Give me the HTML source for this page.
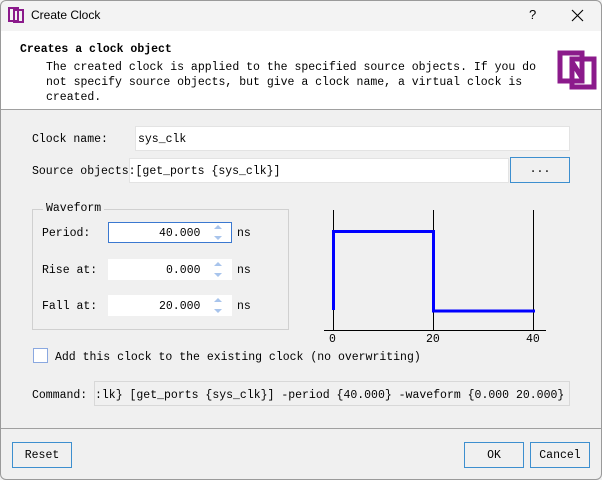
<!DOCTYPE html>
<html><head><style>
*{box-sizing:border-box;margin:0;padding:0}
body{width:602px;height:480px;position:relative;background:#f0f0f0;font-family:"Liberation Mono",monospace;font-size:11.5px;color:#000;overflow:hidden}
.a{position:absolute;white-space:pre}
.f{position:absolute;background:#fff;border:1px solid #e3e3e3}
.btn{position:absolute;border:1px solid #3d8fcf;background:#f0f0f0;text-align:center;line-height:25px}
</style></head><body>
<div class="a" style="left:0;top:0;width:602px;height:31px;background:#f3f3f3"></div>
<svg class="a" style="left:8px;top:7px" width="16" height="16" viewBox="0 0 16 16"><rect x="1" y="1" width="9" height="13" fill="none" stroke="#8b1a8b" stroke-width="2"/><rect x="6" y="3" width="9" height="12" fill="none" stroke="#8b1a8b" stroke-width="2"/></svg>
<div class="a" style="left:31px;top:8px;font-family:'Liberation Sans',sans-serif;font-size:12px">Create Clock</div>
<div class="a" style="left:529px;top:7px;font-family:'Liberation Sans',sans-serif;font-size:13px">?</div>
<svg class="a" style="left:571px;top:9px" width="13" height="13" viewBox="0 0 13 13"><path d="M1 1L12 12M12 1L1 12" stroke="#000" stroke-width="1.1"/></svg>
<div class="a" style="left:0;top:31px;width:602px;height:79px;background:#fff;border-bottom:1px solid #a0a0a0"></div>
<div class="a" style="left:20px;top:43px;font-weight:bold">Creates a clock object</div>
<div class="a" style="left:46px;top:60px;line-height:15px">The created clock is applied to the specified source objects. If you do
not specify source objects, but give a clock name, a virtual clock is
created.</div>
<svg class="a" style="left:557px;top:50px" width="40" height="40" viewBox="0 0 40 40"><rect x="3" y="3" width="22" height="28" fill="none" stroke="#8b1a8b" stroke-width="5"/><rect x="15" y="9" width="22" height="28" fill="none" stroke="#8b1a8b" stroke-width="5"/><path d="M15 12 L25 28" stroke="#8b1a8b" stroke-width="5"/></svg>
<div class="a" style="left:32px;top:133px">Clock name:</div>
<div class="f" style="left:135px;top:126px;width:435px;height:25px"></div>
<div class="a" style="left:138px;top:133px">sys_clk</div>
<div class="f" style="left:129px;top:158px;width:380px;height:25px"></div>
<div class="a" style="left:32px;top:165px">Source objects:[get_ports {sys_clk}]</div>
<div class="btn" style="left:510px;top:157px;width:60px;height:26px;line-height:24px">...</div>
<div class="a" style="left:32px;top:209px;width:257px;height:121px;border:1px solid #d0d0d0"></div>
<div class="a" style="left:43px;top:202px;background:#f0f0f0;padding:0 3px">Waveform</div>
<div class="a" style="left:42px;top:227px">Period:</div>
<div class="f" style="left:108px;top:222px;width:124px;height:21px;border-color:#3a78d0"></div>
<div class="a" style="left:159px;top:227px">40.000</div>
<div class="a" style="left:42px;top:264px">Rise at:</div>
<div class="f" style="left:108px;top:259px;width:124px;height:21px;border:none"></div>
<div class="a" style="left:166px;top:264px">0.000</div>
<div class="a" style="left:42px;top:300px">Fall at:</div>
<div class="f" style="left:108px;top:295px;width:124px;height:21px;border:none"></div>
<div class="a" style="left:159px;top:300px">20.000</div>
<svg class="a" style="left:212px;top:223px" width="12" height="96" viewBox="0 0 12 96"><g fill="#a8c4ec"><path d="M2 6 L6 2 L10 6Z M2 13 L6 17 L10 13Z"/><path d="M2 43 L6 39 L10 43Z M2 50 L6 54 L10 50Z"/><path d="M2 79 L6 75 L10 79Z M2 86 L6 90 L10 86Z"/></g></svg>
<div class="a" style="left:237px;top:227px">ns</div>
<div class="a" style="left:237px;top:264px">ns</div>
<div class="a" style="left:237px;top:300px">ns</div>
<svg class="a" style="left:320px;top:205px" width="230" height="140" viewBox="0 0 230 140">
<g stroke="#000" stroke-width="1"><path d="M13.5 5V125M113.5 5V125M213.5 5V125M4 125.5H226"/></g>
<path d="M13.5 105V26.5H113.5V106H215" fill="none" stroke="#0000ff" stroke-width="3"/>
<g font-family="Liberation Mono,monospace" font-size="11.5"><text x="9" y="137">0</text><text x="106" y="137">20</text><text x="206" y="137">40</text></g>
</svg>
<div class="a" style="left:33px;top:348px;width:15px;height:15px;background:#fff;border:1px solid #8aa8e0"></div>
<div class="a" style="left:55px;top:351px">Add this clock to the existing clock (no overwriting)</div>
<div class="a" style="left:32px;top:389px">Command:</div>
<div class="a" style="left:94px;top:381px;width:476px;height:25px;border:1px solid #d8d8d8;background:#f0f0f0"></div>
<div class="a" style="left:95px;top:389px">:lk} [get_ports {sys_clk}] -period {40.000} -waveform {0.000 20.000}</div>
<div class="a" style="left:0;top:428px;width:602px;border-top:1px solid #a0a0a0"></div>
<div class="btn" style="left:12px;top:442px;width:60px;height:26px">Reset</div>
<div class="btn" style="left:464px;top:442px;width:60px;height:26px">OK</div>
<div class="btn" style="left:530px;top:442px;width:60px;height:26px">Cancel</div>
<div class="a" style="left:0;top:0;width:602px;height:480px;border:1px solid #9a9a9a;border-radius:6px"></div>
</body></html>
